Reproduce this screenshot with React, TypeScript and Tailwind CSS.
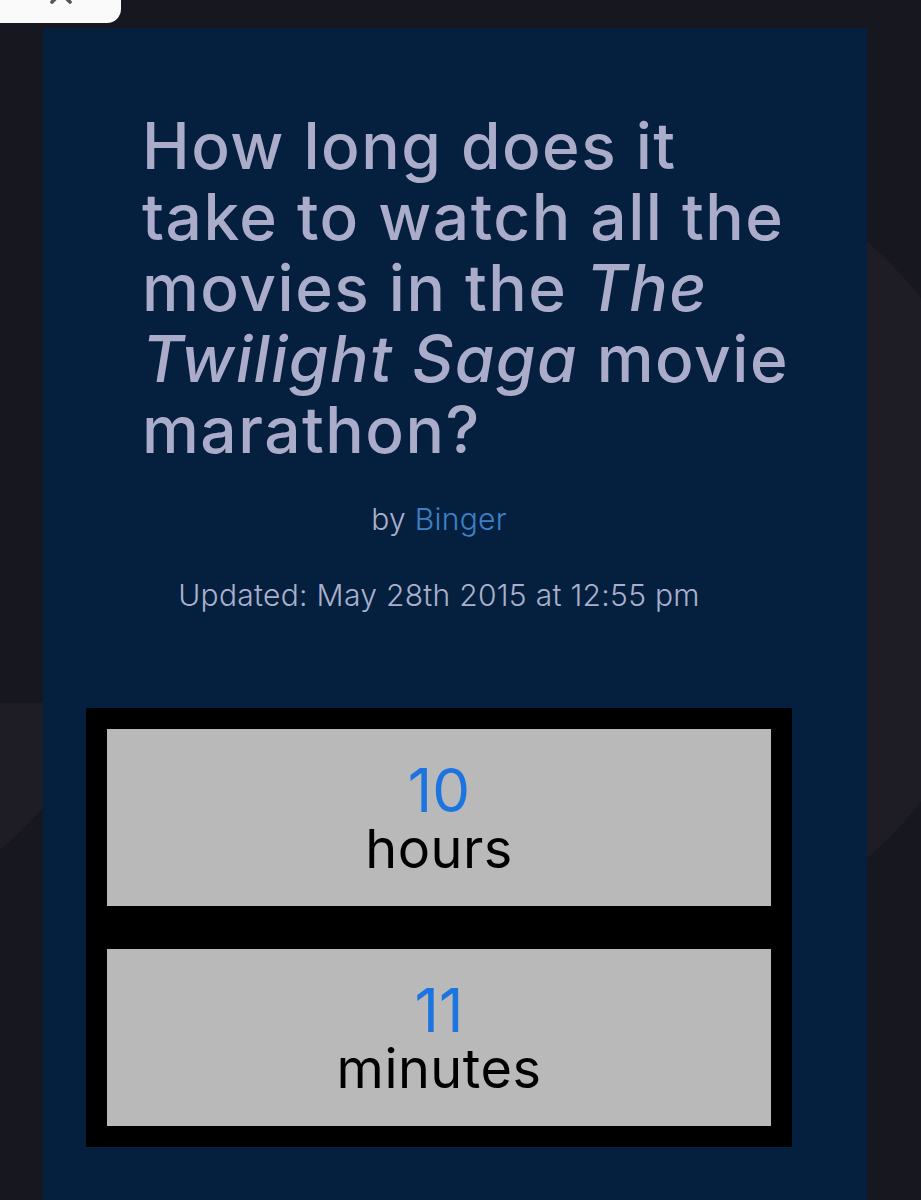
import React from "react";

const font = { fontFamily: "Inter, 'Noto Sans', sans-serif" };

const TimeBox: React.FC<{ value: string; unit: string }> = ({ value, unit }) => (
  <div className="flex h-[177px] flex-col items-center justify-center bg-[#b9b9b9]">
    <span className="text-[60px] leading-[62px] font-normal text-[#1c74e0]">{value}</span>
    <span className="text-[54px] leading-[56px] font-normal tracking-[0.5px] text-black">{unit}</span>
  </div>
);

const App: React.FC = () => {
  return (
    <div className="relative min-h-[1200px] overflow-hidden bg-[#16171f]" style={font}>
      {/* faint background shapes */}
      <div className="absolute left-0 top-[703px] h-[200px] w-[60px] overflow-hidden">
        <div className="absolute left-[-761px] top-[-664px] h-[922px] w-[922px] rounded-full bg-[#1e1d26]" />
      </div>
      <div className="absolute left-[192px] top-[142px] h-[816px] w-[816px] rounded-full bg-[#1e1d26]" />

      {/* close tab */}
      <div className="relative h-[28px]">
        <div className="flex h-[23px] w-[121px] items-end justify-center overflow-hidden rounded-br-[14px] bg-[#fafafa]">
          <svg width="36" height="36" viewBox="0 0 24 24" className="mb-[12px] text-[#555]" fill="none" stroke="currentColor" strokeWidth="2.4" strokeLinecap="round">
            <path d="M6 6l12 12M18 6L6 18" />
          </svg>
        </div>
      </div>

      {/* panel */}
      <div className="relative ml-[43px] min-h-[1172px] w-[824px] bg-[#05203f] pl-[43px]">
        <div className="w-[706px]">
          <h1 className="whitespace-nowrap pl-[56px] pt-[82px] text-[64px] leading-[71px] font-medium tracking-[1.5px] text-[#aaacca]">
            How long does it<br />
            take to watch all the<br />
            movies in the <i>The</i>
            <br />
            <i>Twilight Saga</i> movie<br />
            marathon?
          </h1>

          <p className="mt-[34px] text-center text-[30px] leading-[40px] font-light tracking-[0.3px] text-[#aab0cc]">
            by <span className="text-[#3f80c5]">Binger</span>
          </p>

          <p className="mt-[36px] text-center text-[30px] leading-[40px] font-light tracking-[0.3px] text-[#aab0cc]">
            Updated: May 28th 2015 at 12:55 pm
          </p>

          <div className="mt-[93px] flex flex-col gap-[43px] bg-black p-[21px]">
            <TimeBox value="10" unit="hours" />
            <TimeBox value="11" unit="minutes" />
          </div>
        </div>
      </div>
    </div>
  );
};

export default App;
